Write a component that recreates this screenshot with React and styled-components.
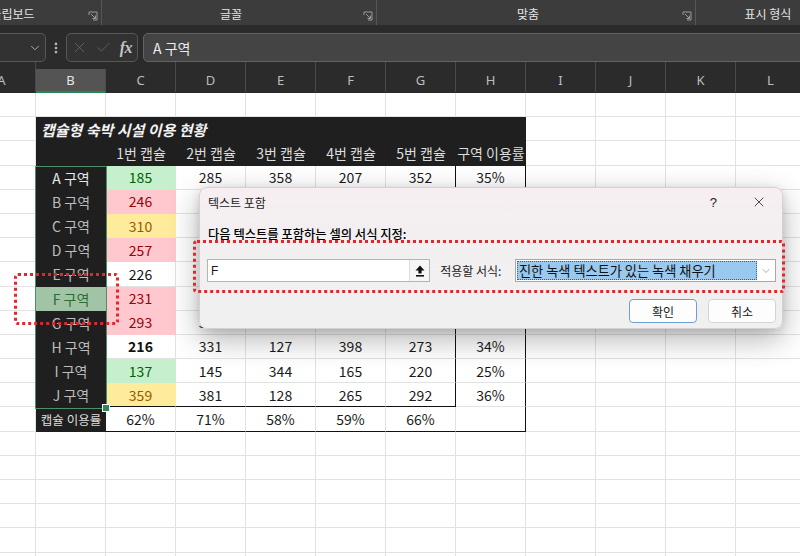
import styled, { createGlobalStyle } from "styled-components";
import { X, Check, ChevronDown, EllipsisVertical } from "lucide-react";

const GlobalStyle = createGlobalStyle`
  body {
    margin: 0;
    font-family: "Noto Sans CJK KR", "Noto Sans", sans-serif;
  }
`;

const COLS = ["A", "B", "C", "D", "E", "F", "G", "H", "I", "J", "K", "L"];

const TONES = {
  good: { fill: "#c6efce", ink: "#006100" },
  bad: { fill: "#ffc7ce", ink: "#9c0006" },
  warn: { fill: "#ffeb9c", ink: "#9c5700" },
  plain: { fill: "#ffffff", ink: "#111111" },
};

const zones = [
  { name: "A 구역", first: 185, tone: "good", rest: [285, 358, 207, 352], rate: "35%" },
  { name: "B 구역", first: 246, tone: "bad", rest: [312, 274, 188, 301], rate: "31%" },
  { name: "C 구역", first: 310, tone: "warn", rest: [198, 265, 342, 219], rate: "33%" },
  { name: "D 구역", first: 257, tone: "bad", rest: [366, 301, 176, 248], rate: "32%" },
  { name: "E 구역", first: 226, tone: "plain", rest: [287, 339, 211, 305], rate: "33%" },
  { name: "F 구역", first: 231, tone: "bad", rest: [254, 199, 318, 276], rate: "30%" },
  { name: "G 구역", first: 293, tone: "bad", rest: [348, 226, 287, 239], rate: "34%" },
  { name: "H 구역", first: 216, tone: "plain", bold: true, rest: [331, 127, 398, 273], rate: "34%" },
  { name: "I 구역", first: 137, tone: "good", rest: [145, 344, 165, 220], rate: "25%" },
  { name: "J 구역", first: 359, tone: "warn", rest: [381, 128, 265, 292], rate: "36%" },
];

const totals = ["62%", "71%", "58%", "59%", "66%"];

export default function App() {
  return (
    <Root>
      <GlobalStyle />
      <Ribbon>
        <RibbonGroup $width={162} $shift={-60}>
          <GroupLabel>클립보드</GroupLabel>
          <Launcher />
        </RibbonGroup>
        <RibbonGroup $width={275}>
          <GroupLabel>글꼴</GroupLabel>
          <Launcher />
        </RibbonGroup>
        <RibbonGroup $width={319}>
          <GroupLabel>맞춤</GroupLabel>
          <Launcher />
        </RibbonGroup>
        <RibbonGroup $width={160} $last>
          <GroupLabel>표시 형식</GroupLabel>
        </RibbonGroup>
      </Ribbon>

      <FormulaBar>
        <NameBox>
          <ChevronDown size={14} strokeWidth={1.4} />
        </NameBox>
        <Grip>
          <EllipsisVertical size={14} strokeWidth={2.6} />
        </Grip>
        <EditButtons>
          <X size={17} strokeWidth={1.1} />
          <Check size={17} strokeWidth={1.1} />
          <Fx>fx</Fx>
        </EditButtons>
        <FormulaInput>A 구역</FormulaInput>
      </FormulaBar>

      <ColumnHeaders>
        {COLS.map((c) => (
          <ColumnHeader key={c} $active={c === "B"}>
            {c}
          </ColumnHeader>
        ))}
      </ColumnHeaders>

      <SheetWrap>
        <Sheet>
          {COLS.map((c) => (
            <Cell key={"r0" + c} />
          ))}

          <Cell />
          <TitleCell>캡슐형 숙박 시설 이용 현황</TitleCell>
          {COLS.slice(8).map((c) => (
            <Cell key={"r1" + c} />
          ))}

          <Cell />
          <DarkCell />
          {["1번 캡슐", "2번 캡슐", "3번 캡슐", "4번 캡슐", "5번 캡슐", "구역 이용률"].map((t) => (
            <DarkCell key={t}>{t}</DarkCell>
          ))}
          {COLS.slice(8).map((c) => (
            <Cell key={"r2" + c} />
          ))}

          {zones.map((z, i) => {
            const last = i === zones.length - 1;
            const tone = TONES[z.tone];
            return [
              <Cell key={z.name + "a"} />,
              <ZoneCell key={z.name + "b"} $active={i === 0} $matched={z.name.startsWith("F")}>
                {z.name}
              </ZoneCell>,
              <Cell
                key={z.name + "c"}
                $fill={tone.fill}
                $ink={tone.ink}
                $bold={z.bold}
                $line={z.tone === "plain" ? undefined : tone.fill}
                $bottom={last ? "#111" : undefined}
              >
                {z.first}
              </Cell>,
              ...z.rest.map((v, k) => (
                <Cell
                  key={z.name + "v" + k}
                  $right={k === 3 ? "#111" : undefined}
                  $bottom={last ? "#111" : undefined}
                >
                  {v}
                </Cell>
              )),
              <Cell key={z.name + "h"} $right="#111">
                {z.rate}
              </Cell>,
              ...COLS.slice(8).map((c) => <Cell key={z.name + c} />),
            ];
          })}

          <Cell />
          <DarkCell $small>캡슐 이용률</DarkCell>
          {totals.map((t) => (
            <Cell key={"t" + t} $bottom="#111">
              {t}
            </Cell>
          ))}
          <Cell $bottom="#111" $right="#111" />
          {COLS.slice(8).map((c) => (
            <Cell key={"r13" + c} />
          ))}

          {Array.from({ length: 6 }).map((_, r) =>
            COLS.map((c) => <Cell key={"e" + r + c} />)
          )}
        </Sheet>
        <Selection>
          <FillHandle />
        </Selection>
      </SheetWrap>

      <Dialog>
        <DialogTitleBar>
          <DialogTitle>텍스트 포함</DialogTitle>
          <TitleButtons>
            <HelpMark>?</HelpMark>
            <X size={16} strokeWidth={1.2} />
          </TitleButtons>
        </DialogTitleBar>
        <DialogBody>
          <Prompt>다음 텍스트를 포함하는 셀의 서식 지정:</Prompt>
          <InputRow>
            <RangeInput>
              <RangeValue>F</RangeValue>
              <CollapseButton>
                <svg width="10" height="12" viewBox="0 0 10 12">
                  <polygon points="5,0.5 9.5,5.5 6.6,5.5 6.6,8.5 3.4,8.5 3.4,5.5 0.5,5.5" fill="#111" />
                  <rect x="1" y="10" width="8" height="1.6" fill="#111" />
                </svg>
              </CollapseButton>
            </RangeInput>
            <FieldLabel>적용할 서식:</FieldLabel>
            <FormatSelect>
              <SelectedOption>진한 녹색 텍스트가 있는 녹색 채우기</SelectedOption>
              <SelectArrow>
                <ChevronDown size={12} strokeWidth={1.2} />
              </SelectArrow>
            </FormatSelect>
          </InputRow>
          <ButtonRow>
            <DialogButton $primary>확인</DialogButton>
            <DialogButton>취소</DialogButton>
          </ButtonRow>
        </DialogBody>
      </Dialog>

      <Callout $left={193} $top={240} $width={592} $height={53} />
      <Callout $left={14} $top={273} $width={105} $height={52} />
    </Root>
  );
}

function Launcher() {
  return (
    <LauncherIcon width="10" height="10" viewBox="0 0 10 10">
      <path d="M1 4V1h8v8H5" fill="none" stroke="#9a9a9a" strokeWidth="1" />
      <path d="M3 3l4.5 4.5M7.5 4.5v3h-3" fill="none" stroke="#9a9a9a" strokeWidth="1" />
    </LauncherIcon>
  );
}

const Root = styled.div`
  position: relative;
  width: 800px;
  height: 556px;
  overflow: hidden;
  background: #ffffff;
`;

const Ribbon = styled.div`
  display: flex;
  height: 25px;
  background: #3c3c3c;
  overflow: hidden;
`;

const RibbonGroup = styled.div`
  position: relative;
  flex: 0 0 ${(p) => p.$width}px;
  margin-left: ${(p) => p.$shift || 0}px;
  display: flex;
  justify-content: center;
  align-items: flex-end;
  padding: 0 16px 3px 0;
  box-sizing: border-box;
  border-right: ${(p) => (p.$last ? "none" : "1px solid #575757")};
`;

const GroupLabel = styled.span`
  font-size: 12px;
  line-height: 16px;
  color: #e4e4e4;
`;

const LauncherIcon = styled.svg`
  position: absolute;
  right: 3px;
  bottom: 4px;
`;

const FormulaBar = styled.div`
  display: flex;
  align-items: stretch;
  height: 29px;
  padding-top: 8px;
  background: #2b2b2b;
`;

const NameBox = styled.div`
  width: 80px;
  margin-left: -34px;
  box-sizing: border-box;
  border: 1px solid #575757;
  border-radius: 5px;
  background: #323232;
  display: flex;
  align-items: center;
  justify-content: flex-end;
  padding-right: 3px;
  color: #c8c8c8;
`;

const Grip = styled.div`
  width: 20px;
  display: flex;
  align-items: center;
  justify-content: center;
  color: #b8b8b8;
`;

const EditButtons = styled.div`
  width: 72px;
  box-sizing: border-box;
  border: 1px solid #575757;
  border-radius: 5px;
  background: #323232;
  display: flex;
  align-items: center;
  justify-content: space-between;
  padding: 0 5px 0 4px;
  color: #6c6c6c;
`;

const Fx = styled.span`
  font-family: "Liberation Serif", serif;
  font-style: italic;
  font-weight: 700;
  font-size: 16px;
  color: #c4c4c4;
  letter-spacing: -0.5px;
`;

const FormulaInput = styled.div`
  flex: 1;
  margin-left: 5px;
  margin-right: -10px;
  box-sizing: border-box;
  border: 1px solid #636363;
  border-radius: 5px;
  background: #444444;
  display: flex;
  align-items: center;
  padding-left: 9px;
  font-size: 14px;
  color: #ececec;
`;

const ColumnHeaders = styled.div`
  display: flex;
  height: 31px;
  margin-left: -32px;
  background: #2b2b2b;
`;

const ColumnHeader = styled.div`
  flex: 0 0 70px;
  box-sizing: border-box;
  margin-top: ${(p) => (p.$active ? 7 : 0)}px;
  display: flex;
  align-items: center;
  justify-content: center;
  padding-top: ${(p) => (p.$active ? 0 : 7)}px;
  font-family: "Noto Sans", sans-serif;
  font-size: 13px;
  color: ${(p) => (p.$active ? "#e6e6e6" : "#bdbdbd")};
  background: ${(p) => (p.$active ? "#545454" : "transparent")};
  border-right: 1px solid #4a4a4a;
  border-bottom: 2px solid ${(p) => (p.$active ? "#1f8a50" : "transparent")};
  background-clip: padding-box;

  &:first-child {
    flex-basis: 68px;
  }
`;

const SheetWrap = styled.div`
  position: relative;
`;

const Sheet = styled.div`
  display: grid;
  grid-template-columns: repeat(12, 70px);
  grid-auto-rows: 24.2px;
  margin-left: -34px;
`;

const Cell = styled.div`
  box-sizing: border-box;
  display: flex;
  align-items: center;
  justify-content: center;
  white-space: nowrap;
  overflow: hidden;
  font-size: 14px;
  font-weight: ${(p) => (p.$bold ? 700 : 400)};
  color: ${(p) => p.$ink || "#1a1a1a"};
  background: ${(p) => p.$fill || "#ffffff"};
  border-right: 1px solid ${(p) => p.$right || p.$line || "#e2e2e2"};
  border-bottom: 1px solid ${(p) => p.$bottom || p.$line || "#e2e2e2"};
`;

const DarkCell = styled.div`
  box-sizing: border-box;
  display: flex;
  align-items: center;
  justify-content: center;
  white-space: nowrap;
  background: #1f1f1f;
  color: #dcdcdc;
  font-size: ${(p) => (p.$small ? 12.5 : 14)}px;
`;

const TitleCell = styled(DarkCell)`
  grid-column: span 7;
  justify-content: flex-start;
  padding-left: 5px;
  font-size: 15px;
  font-weight: 700;
  font-style: italic;
  color: #f2f2f2;
`;

const ZoneCell = styled(DarkCell)`
  background: ${(p) => (p.$matched ? "#a2c4a6" : "#1f1f1f")};
  color: ${(p) => (p.$matched ? "#2c6b33" : p.$active ? "#e8e8e8" : "#bcbcbc")};
`;

const Selection = styled.div`
  position: absolute;
  left: 35px;
  top: 72.6px;
  width: 72px;
  height: 243.6px;
  box-sizing: border-box;
  border: 1.5px solid #4f8f68;
  pointer-events: none;
`;

const FillHandle = styled.div`
  position: absolute;
  right: -4px;
  bottom: -4px;
  width: 6px;
  height: 6px;
  background: #2f8a52;
  border: 1px solid #ffffff;
`;

const Dialog = styled.div`
  position: absolute;
  left: 199px;
  top: 187px;
  width: 584px;
  height: 142px;
  border-radius: 8px;
  background: linear-gradient(#f7eef1 0, #f3eff1 40px, #f0f0f0 100%);
  border: 1px solid #d6d0d3;
  box-sizing: border-box;
  box-shadow: 0 10px 30px rgba(0, 0, 0, 0.3), 0 2px 8px rgba(0, 0, 0, 0.12);
  font-family: "Noto Sans CJK KR", "Noto Sans", sans-serif;
  color: #1a1a1a;
`;

const DialogTitleBar = styled.div`
  height: 28px;
  display: flex;
  align-items: center;
  justify-content: space-between;
  padding: 0 15px 0 8px;
`;

const DialogTitle = styled.span`
  font-size: 12px;
`;

const TitleButtons = styled.div`
  display: flex;
  align-items: center;
  gap: 34px;
  color: #222;
`;

const HelpMark = styled.span`
  font-family: "Liberation Sans", sans-serif;
  font-size: 13px;
`;

const DialogBody = styled.div`
  padding: 10px 6px 0 7px;
`;

const Prompt = styled.div`
  font-size: 12.3px;
  font-weight: 500;
  line-height: 16px;
  padding-left: 1px;
  color: #000;
`;

const InputRow = styled.div`
  display: flex;
  align-items: center;
  margin-top: 17px;
  height: 23px;
`;

const RangeInput = styled.div`
  width: 224px;
  height: 23px;
  box-sizing: border-box;
  border: 1px solid #b4b4b4;
  background: #ffffff;
  display: flex;
  align-items: stretch;
`;

const RangeValue = styled.span`
  flex: 1;
  display: flex;
  align-items: center;
  padding-left: 3px;
  font-family: "Liberation Sans", sans-serif;
  font-size: 12px;
`;

const CollapseButton = styled.span`
  width: 19px;
  display: flex;
  align-items: center;
  justify-content: center;
  background: #f6f6f6;
  border-left: 1px solid #dcdcdc;
`;

const FieldLabel = styled.span`
  margin-left: 10px;
  width: 75px;
  font-size: 12px;
`;

const FormatSelect = styled.div`
  width: 262px;
  height: 23px;
  box-sizing: border-box;
  border: 1px solid #a8a8a8;
  background: #ffffff;
  display: flex;
  align-items: stretch;
  padding: 1px 0 1px 1px;
`;

const SelectedOption = styled.span`
  flex: 1;
  display: flex;
  align-items: center;
  padding-left: 2px;
  background: #99c9ef;
  outline: 1px dotted #555;
  outline-offset: -1px;
  font-size: 13.2px;
  color: #111;
  white-space: nowrap;
`;

const SelectArrow = styled.span`
  width: 18px;
  display: flex;
  align-items: center;
  justify-content: center;
  color: #777;
`;

const ButtonRow = styled.div`
  display: flex;
  justify-content: flex-end;
  gap: 11px;
  margin-top: 17px;
`;

const DialogButton = styled.div`
  width: 68px;
  height: 24px;
  box-sizing: border-box;
  display: flex;
  align-items: center;
  justify-content: center;
  border-radius: 4px;
  background: #fdfdfd;
  border: 1px solid ${(p) => (p.$primary ? "#6f9fd0" : "#d4d4d4")};
  font-size: 12px;
  color: #1a1a1a;
`;

const Callout = styled.div`
  position: absolute;
  left: ${(p) => p.$left}px;
  top: ${(p) => p.$top}px;
  width: ${(p) => p.$width}px;
  height: ${(p) => p.$height}px;
  box-sizing: border-box;
  border: 3px dotted #e3262c;
  border-radius: 4px;
  pointer-events: none;
`;
